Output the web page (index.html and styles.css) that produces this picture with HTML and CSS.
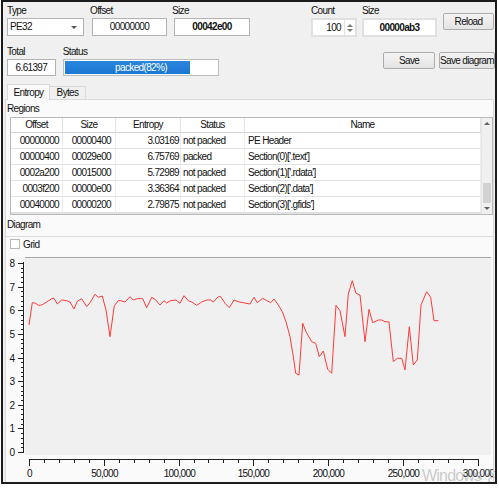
FILE: index.html
```html
<!DOCTYPE html>
<html lang="en">
<head>
    <meta charset="UTF-8">
    <title>Entropy</title>
    <link rel="stylesheet" href="styles.css">
</head>
<body>
<div class="window">
    <div class="toolbar">
        <div class="row row-a">
            <div class="field f-type">
                <label>Type</label>
                <div class="combo"><span>PE32</span><i class="arrow"></i></div>
            </div>
            <div class="field f-offset">
                <label>Offset</label>
                <div class="box">00000000</div>
            </div>
            <div class="field f-size">
                <label>Size</label>
                <div class="box bold">00042e00</div>
            </div>
            <div class="field f-count">
                <label>Count</label>
                <div class="spin">
                    <span>100</span>
                    <div class="spin-btns"><i class="up"></i><i class="down"></i></div>
                </div>
            </div>
            <div class="field f-bsize">
                <label>Size</label>
                <div class="box bold framed">00000ab3</div>
            </div>
            <button class="btn btn-reload">Reload</button>
        </div>
        <div class="row row-b">
            <div class="field f-total">
                <label>Total</label>
                <div class="box">6.61397</div>
            </div>
            <div class="field f-status">
                <label>Status</label>
                <div class="progress">
                    <div class="progress-fill" style="width: 82%"></div>
                    <div class="progress-text">packed(82%)</div>
                </div>
            </div>
            <button class="btn btn-save">Save</button>
            <button class="btn btn-savediag">Save diagram</button>
        </div>
    </div>

    <div class="tabs">
        <div class="tab active">Entropy</div>
        <div class="tab">Bytes</div>
    </div>

    <div class="tab-page">
        <div class="caption caption-regions">Regions</div>
        <div class="list">
            <table class="regions">
                <thead>
                    <tr>
                        <th class="c-off">Offset</th>
                        <th class="c-size">Size</th>
                        <th class="c-ent">Entropy</th>
                        <th class="c-stat">Status</th>
                        <th class="c-name">Name</th>
                    </tr>
                </thead>
                <tbody>
                    <tr><td class="c-off">00000000</td><td class="c-size">00000400</td><td class="c-ent">3.03169</td><td class="c-stat">not packed</td><td class="c-name">PE Header</td></tr>
                    <tr><td class="c-off">00000400</td><td class="c-size">00029e00</td><td class="c-ent">6.75769</td><td class="c-stat">packed</td><td class="c-name">Section(0)['.text']</td></tr>
                    <tr><td class="c-off">0002a200</td><td class="c-size">00015000</td><td class="c-ent">5.72989</td><td class="c-stat">not packed</td><td class="c-name">Section(1)['.rdata']</td></tr>
                    <tr><td class="c-off">0003f200</td><td class="c-size">00000e00</td><td class="c-ent">3.36364</td><td class="c-stat">not packed</td><td class="c-name">Section(2)['.data']</td></tr>
                    <tr><td class="c-off">00040000</td><td class="c-size">00000200</td><td class="c-ent">2.79875</td><td class="c-stat">not packed</td><td class="c-name">Section(3)['.gfids']</td></tr>
                    <tr><td class="c-off"></td><td class="c-size"></td><td class="c-ent"></td><td class="c-stat"></td><td class="c-name"></td></tr>
                </tbody>
            </table>
            <div class="vscroll">
                <div class="sb-btn"><i class="up"></i></div>
                <div class="sb-track"><div class="sb-thumb"></div></div>
                <div class="sb-btn"><i class="down"></i></div>
            </div>
        </div>

        <div class="caption caption-diagram">Diagram</div>
        <div class="diagram">
            <div class="grid-row">
                <span class="check"></span>
                <span>Grid</span>
            </div>
            <svg class="chart" width="487" height="231" viewBox="6 251 487 231">
                <rect x="25" y="257" width="466" height="198" fill="#f0f0f0"/>
                <line x1="25" y1="257.5" x2="491" y2="257.5" stroke="#a8a8a8" shape-rendering="crispEdges"/>
                <g id="yaxis" class="axis"></g>
                <g id="xaxis" class="axis"></g>
                <polyline class="series" points="29,325 32.3,302.7 35.7,303.3 38.3,305.3 41.7,305 46.7,302 51.7,298.7 54,298.3 57.3,304 61.7,300 66.7,300.7 70,302 74,309 77.3,301.3 81.7,298.7 86.7,306.7 90,302.7 95,294.3 98.3,297.3 102.3,296 106,310 110,336.7 114.3,305.7 118.3,300.7 120.7,300.7 125,302 130,296.7 133.3,300 137.3,298.7 142.7,298.7 146.7,307.7 151.7,297.3 155,299.3 160,305 164,300.7 166.7,303 170.7,300.7 176,300 180,303.3 184,295.7 188.3,300.7 191.7,302 196.7,305.3 201.7,302 206.7,300 210.7,300 213.3,302 218.3,296.7 220.7,296.7 225,303.3 229.3,307.7 234,300 238.3,301.7 243.3,302.7 250,304 254,297.3 257.3,302.7 262.7,298.3 270.7,302.7 274,299 278.3,305 282.3,311.7 286,321.7 290,336.7 293.3,356.7 295.7,373.3 299,375 302.7,323.3 306,331.7 311.7,341.7 315.7,343.3 319.3,356.7 323.3,351 327.7,369.3 331.7,373.3 336,305.3 340,310.7 345,336.7 348.3,294 352.3,280.7 356,293.3 360,295 365,341.7 369,309.3 372.7,322.7 378.3,320 381.7,320 385,321.7 389,322 393.3,361.7 397.3,358.3 401.7,358.3 405,370 409.3,326.7 413.3,365 417.3,360 421,305 426.7,291.7 430.7,297.3 434,320.7 438.3,320.7"/>
            </svg>
        </div>
    </div>

    <div class="watermark">Windows 정품 인증</div>
</div>

<script>
    const NS = 'http://www.w3.org/2000/svg';

    function addLine(g, x1, y1, x2, y2) {
        const l = document.createElementNS(NS, 'line');
        l.setAttribute('x1', x1); l.setAttribute('y1', y1);
        l.setAttribute('x2', x2); l.setAttribute('y2', y2);
        g.appendChild(l);
    }

    function addText(g, x, y, str) {
        const t = document.createElementNS(NS, 'text');
        t.setAttribute('x', x); t.setAttribute('y', y);
        t.textContent = str;
        g.appendChild(t);
    }

    // y axis: 0..8, minor tick every 0.2
    const yAxis = document.getElementById('yaxis');
    for (let i = 0; i <= 40; i++) {
        const y = Math.round(452 - i * 4.725) + 0.5;
        const major = i % 5 === 0;
        addLine(yAxis, major ? 18 : 20.5, y, 23.5, y);
        if (major) addText(yAxis, 12, y + 3, i / 5);
    }
    addLine(yAxis, 23.5, 262, 23.5, 453);

    // x axis: 0..300,000, minor tick every 10,000
    const xAxis = document.getElementById('xaxis');
    for (let i = 0; i <= 30; i++) {
        const x = Math.round(29 + i * 14.957) + 0.5;
        const major = i % 5 === 0;
        addLine(xAxis, x, 459.5, x, major ? 466 : 463);
        if (major) addText(xAxis, x, 477, (i * 10000).toLocaleString('en-US'));
    }
    addLine(xAxis, 29, 459.5, 478.5, 459.5);
</script>
</body>
</html>
```

FILE: styles.css
```css
* {
    box-sizing: border-box;
}
body {
    margin: 0;
    background: #fff;
    font-family: "Liberation Sans", Arial, sans-serif;
    font-size: 10px;
    letter-spacing: -0.65px;
    color: #111;
}
.window {
    position: relative;
    width: 496px;
    height: 484px;
    margin-left: 1px;
    border: 2px solid #1c1c1c;
    background: #f0f0f0;
    overflow: hidden;
}

/* top controls */
.toolbar {
    height: 80px;
    padding: 2px 0 0 4px;
}
.row {
    display: flex;
    align-items: flex-start;
}
.row-b {
    margin-top: 8px;
}
.field {
    display: flex;
    flex-direction: column;
}
.field label {
    height: 13px;
    line-height: 13px;
    margin-bottom: 1px;
}
.f-offset label, .f-size label {
    margin-left: -2px;
}
.f-type { width: 77px; }
.f-offset { width: 75px; margin-left: 8px; }
.f-size { width: 76px; margin-left: 7px; }
.f-count { width: 46px; margin-left: 61px; }
.f-bsize { width: 75px; margin-left: 5px; }
.f-total { width: 49px; }
.f-status { width: 157px; margin-left: 7px; }

.box, .combo, .spin {
    height: 18px;
    line-height: 16px;
    background: #fff;
    border: 1px solid #b4b4b4;
    white-space: nowrap;
}
.box {
    text-align: center;
}
.row-b .box {
    height: 17px;
    line-height: 15px;
}
.bold {
    font-weight: bold;
}
.framed, .spin {
    height: 19px;
    line-height: 15px;
    border: 2px solid #e0e0e0;
    box-shadow: inset 0 0 0 1px #fff;
}
.combo {
    display: flex;
    align-items: center;
    justify-content: space-between;
    padding: 0 6px 0 2px;
}
.arrow {
    width: 0;
    height: 0;
    border-left: 3px solid transparent;
    border-right: 3px solid transparent;
    border-top: 3px solid #555;
}
.spin {
    display: flex;
    justify-content: flex-end;
    padding-right: 0;
}
.spin span {
    padding-right: 3px;
}
.spin-btns {
    width: 11px;
    display: flex;
    flex-direction: column;
    justify-content: center;
    align-items: center;
    gap: 2px;
    border-left: 1px solid #e3e3e3;
}
.up, .down {
    width: 0;
    height: 0;
    border-left: 3px solid transparent;
    border-right: 3px solid transparent;
}
.up {
    border-bottom: 3px solid #7a7a7a;
}
.down {
    border-top: 3px solid #7a7a7a;
}

.btn {
    height: 17px;
    padding: 0;
    font: inherit;
    letter-spacing: inherit;
    color: #111;
    white-space: nowrap;
    background: linear-gradient(#f4f4f4, #e4e4e4);
    border: 1px solid #acacac;
    border-radius: 2px;
}
.btn-reload {
    width: 51px;
    margin: 9px 0 0 6px;
}
.btn-save {
    width: 52px;
    margin: 7px 0 0 164px;
}
.btn-savediag {
    width: 56px;
    flex-shrink: 0;
    margin: 7px 0 0 4px;
}

.progress {
    position: relative;
    height: 17px;
    padding: 1px;
    background: #fff;
    border: 1px solid #bcbcbc;
}
.progress-fill {
    height: 100%;
    background: linear-gradient(#2a86dc, #1a76d2);
}
.progress-text {
    position: absolute;
    inset: 0;
    line-height: 15px;
    text-align: center;
    color: #fff;
}

/* tabs */
.tabs {
    height: 17px;
    display: flex;
    align-items: flex-end;
    padding-left: 4px;
}
.tab {
    height: 13px;
    line-height: 12px;
    width: 37px;
    margin-left: -1px;
    text-align: center;
    background: #f0f0f0;
    border: 1px solid #d9d9d9;
    border-bottom: none;
}
.tab.active {
    position: relative;
    z-index: 1;
    width: 43px;
    height: 16px;
    line-height: 16px;
    margin: 0 0 -1px 0;
    background: #fafafa;
}
.tab-page {
    height: 383px;
    margin: 0 1px 0 2px;
    background: #fafafa;
    border: 1px solid #d9d9d9;
    border-bottom: none;
}
.caption {
    line-height: 13px;
    padding-left: 1px;
}
.caption-regions {
    height: 17px;
    padding-top: 2px;
}
.caption-diagram {
    height: 21px;
    padding-top: 3px;
}

/* region list */
.list {
    display: flex;
    height: 98px;
    margin-left: 4px;
    background: #fff;
    border: 1px solid #bababa;
    overflow: hidden;
}
.regions {
    width: 470px;
    table-layout: fixed;
    border-spacing: 0;
    flex-shrink: 0;
}
.regions th, .regions td {
    padding: 0;
    white-space: nowrap;
    overflow: hidden;
    font-weight: normal;
}
.regions th {
    line-height: 14px;
    text-align: center;
    border-bottom: 1px solid #d5d5d5;
    border-right: 1px solid #e3e3e3;
}
.regions td {
    line-height: 15px;
    border-bottom: 1px solid #e0e0e0;
    border-right: 1px solid #ededed;
}
.c-off { width: 52px; }
.c-size { width: 53px; }
.c-ent { width: 65px; }
.c-stat { width: 64px; }
.c-name { width: 236px; }
td.c-off { text-align: right; padding-right: 3px; }
td.c-size { text-align: right; padding-right: 4px; }
td.c-ent { text-align: right; padding-right: 1px; }
td.c-stat { padding-left: 2px; }
td.c-name { padding-left: 3px; }

.vscroll {
    width: 11px;
    display: flex;
    flex-direction: column;
    background: #f0f0f0;
    border-left: 1px solid #e6e6e6;
}
.sb-btn {
    height: 11px;
    display: flex;
    align-items: center;
    justify-content: center;
}
.sb-btn .up {
    border-bottom-color: #606060;
}
.sb-btn .down {
    border-top-color: #606060;
}
.sb-track {
    flex: 1;
}
.sb-thumb {
    height: 20px;
    margin: 54px 1px 0 1px;
    background: #d2d2d2;
}

/* diagram */
.diagram {
    border-top: 1px solid #dadada;
}
.grid-row {
    height: 14px;
    display: flex;
    align-items: center;
    gap: 3px;
    padding-left: 4px;
}
.check {
    width: 10px;
    height: 10px;
    background: #fff;
    border: 1px solid #b8b8b8;
}
.chart {
    display: block;
}
.axis line {
    stroke: #222;
    shape-rendering: crispEdges;
}
.axis text {
    font-size: 10px;
    letter-spacing: -0.65px;
    text-anchor: middle;
    fill: #111;
}
.series {
    fill: none;
    stroke: #ff3a3a;
    stroke-width: 1;
    stroke-linejoin: round;
}

.watermark {
    position: absolute;
    left: 419px;
    top: 466px;
    font-family: "Liberation Sans", "Noto Sans CJK KR", sans-serif;
    font-size: 16px;
    line-height: 16px;
    letter-spacing: -0.8px;
    white-space: nowrap;
    color: rgba(140, 140, 140, 0.45);
}
```
